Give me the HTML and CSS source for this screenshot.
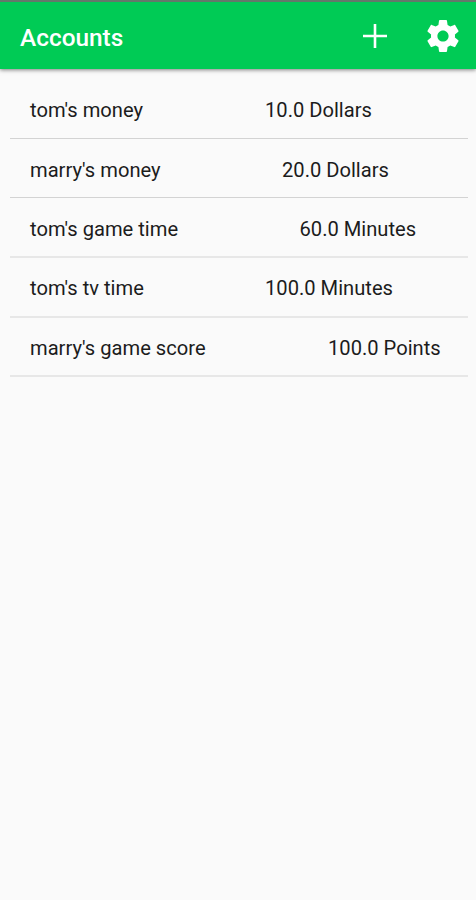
FILE: index.html
```html
<!DOCTYPE html>
<html lang="en">
<head>
<meta charset="utf-8">
<title>Accounts</title>
<link rel="stylesheet" href="styles.css">
</head>
<body>
<header class="bar">
<h1 class="title">Accounts</h1>
<svg class="add" viewBox="0 0 24 24"><path d="M0 12H24M12 0V24"/></svg>
<svg class="gear" viewBox="2 2 20 20"><path d="M19.43 12.98c.04-.32.07-.64.07-.98s-.03-.66-.07-.98l2.11-1.65c.19-.15.24-.42.12-.64l-2-3.46c-.12-.22-.39-.3-.61-.22l-2.49 1c-.52-.4-1.08-.73-1.69-.98l-.38-2.65C14.46 2.18 14.25 2 14 2h-4c-.25 0-.46.18-.49.42l-.38 2.65c-.61.25-1.17.59-1.69.98l-2.49-1c-.23-.09-.49 0-.61.22l-2 3.46c-.13.22-.07.49.12.64l2.11 1.65c-.04.32-.07.65-.07.98s.03.66.07.98l-2.11 1.65c-.19.15-.24.42-.12.64l2 3.46c.12.22.39.3.61.22l2.49-1c.52.4 1.08.73 1.69.98l.38 2.65c.03.24.24.42.49.42h4c.25 0 .46-.18.49-.42l.38-2.65c.61-.25 1.17-.59 1.69-.98l2.49 1c.23.09.49 0 .61-.22l2-3.46c.12-.22.07-.49-.12-.64l-2.11-1.65zM12 15.5c-1.93 0-3.5-1.57-3.5-3.5s1.57-3.5 3.5-3.5 3.5 1.57 3.5 3.5-1.57 3.5-3.5 3.5z"/></svg>
</header>
<ul class="list">
<li class="row"><span class="name">tom's money</span><span>10.0 Dollars</span></li>
<li class="row"><span class="name wide">marry's money</span><span>20.0 Dollars</span></li>
<li class="row soft"><span class="name wider">tom's game time</span><span>60.0 Minutes</span></li>
<li class="row soft"><span class="name">tom's tv time</span><span>100.0 Minutes</span></li>
<li class="row soft"><span class="name widest">marry's game score</span><span>100.0 Points</span></li>
</ul>
</body>
</html>
```
FILE: styles.css
```css
* { box-sizing: border-box; }
body { margin: 0; height: 900px; background: #fafafa; color: #1c1c1c; font-family: Roboto, sans-serif; overflow: hidden; }
.bar { height: 69px; display: flex; align-items: center; padding: 0 17px 0 20px; border-top: 2px solid #64786b; background: #00cb55; box-shadow: 0 1px 4px rgba(0,0,0,.5); }
.title { flex: 1; margin: 0; padding-top: 5px; color: #fff; font-size: 24.4px; font-weight: 500; line-height: 28px; }
.add { width: 24px; height: 24px; margin-right: 40px; fill: none; stroke: #fff; stroke-width: 2.6; }
.gear { width: 32px; height: 32px; fill: #fff; }
.list { list-style: none; margin: 10px 8px 0 10px; padding: 0; }
.row { display: flex; align-items: center; height: 59.7px; padding: 3px 0 0 20px; border-bottom: 1px solid #d3d3d3; font-size: 20.15px; white-space: nowrap; }
.soft { border-bottom: 2px solid #e7e7e7; }
.name { width: 235px; }
.wide { width: 252px; }
.wider { width: 269.5px; }
.widest { width: 298px; }
```
